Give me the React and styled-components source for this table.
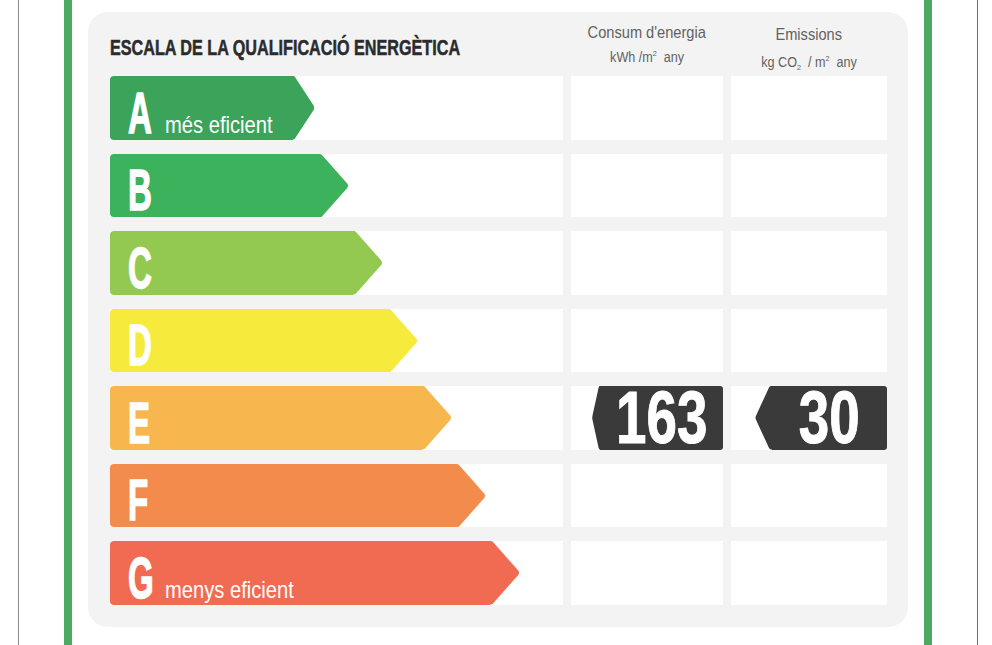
import * as React from 'react';
import styled, { createGlobalStyle } from 'styled-components';

const GlobalStyle = createGlobalStyle`
  html, body {
    margin: 0;
    padding: 0;
    background: #ffffff;
  }
  body {
    font-family: "Liberation Sans", Arial, sans-serif;
  }
`;

// no condensed face is installed, so the narrow look comes from scaleX
const SANS = `"Liberation Sans", Arial, sans-serif`;

const classes = [
  { letter: 'A', color: '#3ba35a', caption: 'més eficient' },
  { letter: 'B', color: '#3cb25c' },
  { letter: 'C', color: '#94c951' },
  { letter: 'D', color: '#f6ea3d' },
  { letter: 'E', color: '#f7b74e' },
  { letter: 'F', color: '#f38b4d' },
  { letter: 'G', color: '#f16b52', caption: 'menys eficient' },
];

// qualification of this building
const rating = { letter: 'E', energy: 163, emissions: 30 };

export default function App() {
  return (
    <>
      <GlobalStyle />
      <Sheet>
        <Frame>
          <Panel>
            <TitleCell>
              <Title>ESCALA DE LA QUALIFICACIÓ ENERGÈTICA</Title>
            </TitleCell>
            <ColHead>
              <HeadLine>Consum d'energia</HeadLine>
              <HeadUnit>kWh /m<sup>2</sup>&nbsp; any</HeadUnit>
            </ColHead>
            <ColHead $offset={2}>
              <HeadLine>Emissions</HeadLine>
              <HeadUnit $offset={3}>kg CO<sub>2</sub>&nbsp; / m<sup>2</sup>&nbsp; any</HeadUnit>
            </ColHead>

            {classes.map((c, i) => (
              <React.Fragment key={c.letter}>
                <Strip>
                  <Arrow $width={205 + i * 34.2}>
                    <ArrowBody $color={c.color}>
                      <Label>
                        <Letter>{c.letter}</Letter>
                        {c.caption && <Caption>{c.caption}</Caption>}
                      </Label>
                    </ArrowBody>
                    <svg width="31" height="100%" viewBox="0 0 31 64" preserveAspectRatio="none" style={{ marginLeft: -1 }}>
                      <path d="M0 0 L2 0 Q3 0 4 1 L29 29.5 Q31 32 29 34.5 L4 63 Q3 64 2 64 L0 64 Z" fill={c.color} />
                    </svg>
                  </Arrow>
                </Strip>
                <Cell>
                  {rating.letter === c.letter && <Badge $width={131}>{rating.energy}</Badge>}
                </Cell>
                <Cell>
                  {rating.letter === c.letter && <Badge $width={132}>{rating.emissions}</Badge>}
                </Cell>
              </React.Fragment>
            ))}
          </Panel>
        </Frame>
      </Sheet>
    </>
  );
}

function Badge({ $width, children }) {
  return (
    <BadgeWrap $width={$width}>
      <svg width="18" height="100%" viewBox="0 0 18 64" preserveAspectRatio="none" style={{ marginRight: -1 }}>
        <path d="M18 0 L16 0 Q15 0 14 1.5 L1 30 Q0 32 1 34 L14 62.5 Q15 64 16 64 L18 64 Z" fill="#3a3a3a" />
      </svg>
      <BadgeBody>
        <Digits>{children}</Digits>
      </BadgeBody>
    </BadgeWrap>
  );
}

export const Sheet = styled.div`
  box-sizing: border-box;
  margin-left: 18px;
  width: 960px;
  height: 645px;
  padding: 0 45px;
  border-left: 1px solid #8c8c8c;
  border-right: 1px solid #6e6e6e;
`;

export const Frame = styled.div`
  box-sizing: border-box;
  height: 100%;
  padding: 12px 16px 0;
  border-left: 8px solid #4daa62;
  border-right: 8px solid #4daa62;
`;

export const Panel = styled.div`
  box-sizing: border-box;
  height: 615px;
  padding: 0 21px 22px 22px;
  background: #f3f3f3;
  border-radius: 20px;
  display: grid;
  grid-template-columns: 453px 152px 156px;
  grid-template-rows: 50px repeat(7, 63.5px);
  column-gap: 8px;
  row-gap: 14px;
`;

export const TitleCell = styled.div`
  padding-top: 25px;
  white-space: nowrap;
`;

export const Title = styled.span`
  display: inline-block;
  font-family: ${SANS};
  font-weight: 700;
  font-size: 22px;
  line-height: 1;
  color: #2b2b2b;
  -webkit-text-stroke: 0.5px #2b2b2b;
  transform: scaleX(0.735);
  transform-origin: 0 0;
`;

export const ColHead = styled.div`
  display: flex;
  flex-direction: column;
  align-items: center;
  padding-top: ${p => 11 + (p.$offset || 0)}px;
  font-family: ${SANS};
  color: #626262;
  white-space: nowrap;

  sup, sub {
    font-size: 8px;
  }
`;

export const HeadLine = styled.div`
  font-size: 17px;
  line-height: 20px;
  transform: scaleX(0.86);
`;

export const HeadUnit = styled.div`
  margin-top: ${p => 2 + (p.$offset || 0)}px;
  font-size: 14px;
  line-height: 18px;
  transform: scaleX(0.9);
`;

export const Strip = styled.div`
  background: #ffffff;
  display: flex;
`;

export const Cell = styled.div`
  background: #ffffff;
  display: flex;
  justify-content: flex-end;
`;

export const Arrow = styled.div`
  display: flex;
  width: ${p => p.$width}px;
  height: 100%;
`;

export const ArrowBody = styled.div`
  flex: 1;
  display: flex;
  align-items: flex-end;
  padding-left: 18px;
  background: ${p => p.$color};
  border-radius: 4px 0 0 4px;
`;

export const Label = styled.div`
  display: flex;
  align-items: baseline;
  color: #ffffff;
  font-family: ${SANS};
  white-space: nowrap;
`;

export const Letter = styled.span`
  display: inline-block;
  width: 25px;
  font-size: 57px;
  line-height: 54px;
  font-weight: 700;
  -webkit-text-stroke: 1.5px #ffffff;
  transform: scaleX(0.58);
  transform-origin: 0 0;
`;

export const Caption = styled.span`
  display: inline-block;
  margin-left: 12px;
  font-size: 24px;
  line-height: 1;
  transform: scaleX(0.84);
  transform-origin: 0 0;
`;

export const BadgeWrap = styled.div`
  display: flex;
  width: ${p => p.$width}px;
  height: 100%;
`;

export const BadgeBody = styled.div`
  flex: 1;
  display: flex;
  align-items: center;
  justify-content: center;
  background: #3a3a3a;
  border-radius: 0 3px 3px 0;
`;

export const Digits = styled.span`
  display: inline-block;
  color: #ffffff;
  font-family: ${SANS};
  font-weight: 700;
  font-size: 74px;
  line-height: 1;
  -webkit-text-stroke: 1px #ffffff;
  transform: scaleX(0.74);
`;
